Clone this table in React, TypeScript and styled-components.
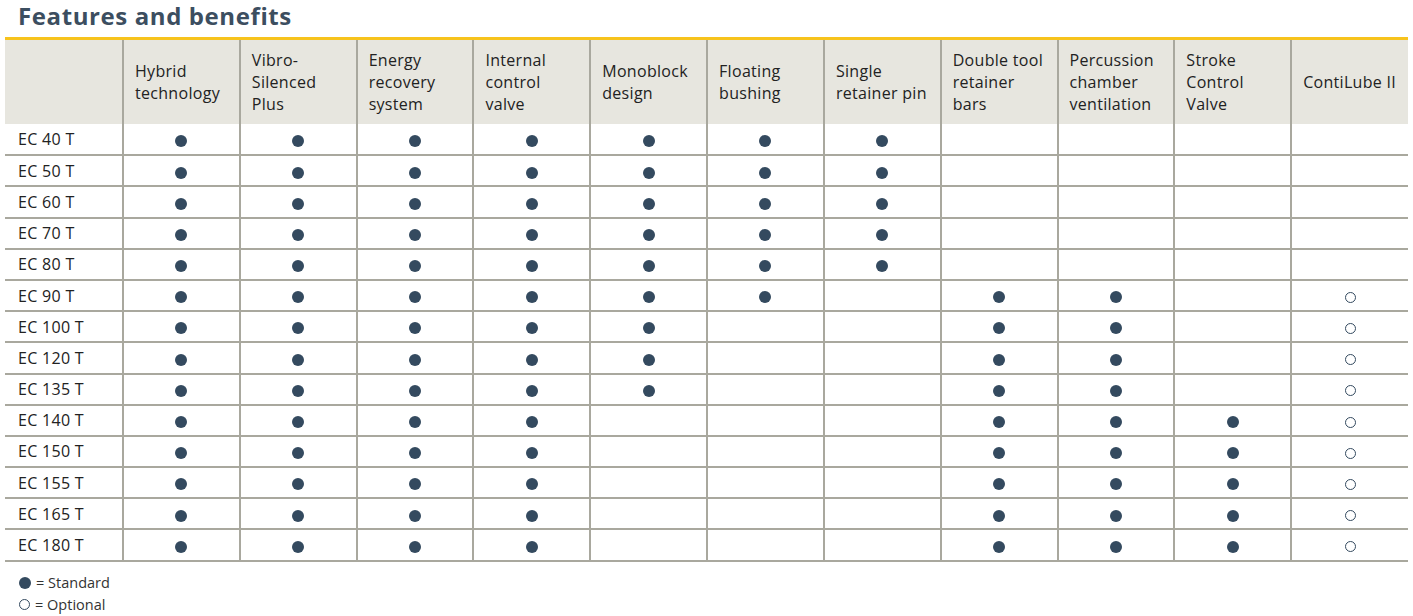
import { FC } from 'react';
import styled, { createGlobalStyle } from 'styled-components';

const GlobalStyle = createGlobalStyle`
  body {
    margin: 0;
    background: #ffffff;
    font-family: 'Open Sans', 'Liberation Sans', sans-serif;
    color: #222;
  }
`;

const Page = styled.div`
  padding: 0 5px;
  width: 1403px;
`;

const Title = styled.h2`
  margin: 0;
  padding: 1px 0 0 13px;
  height: 36px;
  font-size: 24px;
  font-weight: 700;
  letter-spacing: 0.6px;
  color: #3c4e60;
  line-height: 30px;
`;

const Table = styled.table`
  width: 100%;
  table-layout: fixed;
  border-collapse: collapse;
  border-top: 3px solid #f7c31d;
`;

const FirstCol = styled.col`
  width: 118px;
`;

const HeadCell = styled.th`
  height: 83px;
  padding: 0 6px 1px 11px;
  background: #e7e6df;
  border-left: 2px solid #a9a89e;
  text-align: left;
  vertical-align: middle;
  font-size: 16px;
  font-weight: 500;
  letter-spacing: 0.3px;
  line-height: 22px;
  color: #222;

  &:first-child {
    border-left: none;
  }
`;

const Row = styled.tr`
  height: 31.2px;
  border-bottom: 2px solid #a9a89e;
`;

const ModelCell = styled.td`
  padding: 0 0 0 13px;
  font-size: 16px;
  font-weight: 500;
  letter-spacing: 0.3px;
  color: #222;
`;

const MarkCell = styled.td`
  border-left: 2px solid #a9a89e;
  text-align: center;
  vertical-align: middle;
`;

const Dot = styled.span<{ $optional?: boolean }>`
  display: inline-block;
  vertical-align: middle;
  box-sizing: border-box;
  width: ${p => (p.$optional ? '11px' : '12px')};
  height: ${p => (p.$optional ? '11px' : '12px')};
  border-radius: 50%;
  background: ${p => (p.$optional ? '#fff' : '#344a5f')};
  border: ${p => (p.$optional ? '1px solid #344a5f' : 'none')};
`;

const Legend = styled.div`
  padding: 10px 0 0 14px;
  display: flex;
  flex-direction: column;
`;

const LegendItem = styled.div`
  display: flex;
  align-items: center;
  gap: 5px;
  height: 22px;
  font-size: 14.5px;
  color: #333;
`;

const features = [
  'Hybrid technology',
  'Vibro-Silenced Plus',
  'Energy recovery system',
  'Internal control valve',
  'Monoblock design',
  'Floating bushing',
  'Single retainer pin',
  'Double tool retainer bars',
  'Percussion chamber ventilation',
  'Stroke Control Valve',
  'ContiLube II',
];

// s = standard, o = optional, - = none
const models: [string, string][] = [
  ['EC 40 T', 'sssssss----'],
  ['EC 50 T', 'sssssss----'],
  ['EC 60 T', 'sssssss----'],
  ['EC 70 T', 'sssssss----'],
  ['EC 80 T', 'sssssss----'],
  ['EC 90 T', 'ssssss-ss-o'],
  ['EC 100 T', 'sssss--ss-o'],
  ['EC 120 T', 'sssss--ss-o'],
  ['EC 135 T', 'sssss--ss-o'],
  ['EC 140 T', 'ssss---ssso'],
  ['EC 150 T', 'ssss---ssso'],
  ['EC 155 T', 'ssss---ssso'],
  ['EC 165 T', 'ssss---ssso'],
  ['EC 180 T', 'ssss---ssso'],
];

const App: FC = () => (
  <Page>
    <GlobalStyle />
    <Title>Features and benefits</Title>
    <Table>
      <colgroup>
        <FirstCol />
        {features.map(f => (
          <col key={f} />
        ))}
      </colgroup>
      <thead>
        <tr>
          <HeadCell />
          {features.map(f => (
            <HeadCell key={f}>{f}</HeadCell>
          ))}
        </tr>
      </thead>
      <tbody>
        {models.map(([name, marks]) => (
          <Row key={name}>
            <ModelCell>{name}</ModelCell>
            {marks.split('').map((m, i) => (
              <MarkCell key={i}>
                {m === 's' && <Dot />}
                {m === 'o' && <Dot $optional />}
              </MarkCell>
            ))}
          </Row>
        ))}
      </tbody>
    </Table>
    <Legend>
      <LegendItem>
        <Dot /> = Standard
      </LegendItem>
      <LegendItem>
        <Dot $optional /> = Optional
      </LegendItem>
    </Legend>
  </Page>
);

export default App;
